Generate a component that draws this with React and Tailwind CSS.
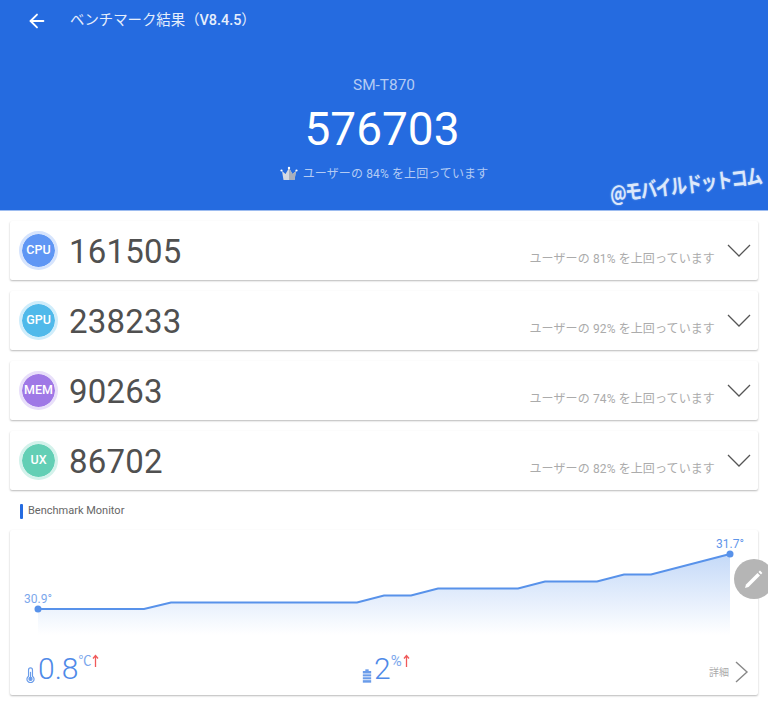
import React from 'react';
import { ArrowLeft } from 'lucide-react';

const scores = [
    { label: 'CPU', score: '161505', percent: 81, fill: 'bg-[#5f96f4]', ring: 'border-[#d6e4fd]' },
    { label: 'GPU', score: '238233', percent: 92, fill: 'bg-[#50b9ea]', ring: 'border-[#cfedfb]' },
    { label: 'MEM', score: '90263', percent: 74, fill: 'bg-[#9f78e6]', ring: 'border-[#e8dffa]' },
    { label: 'UX', score: '86702', percent: 82, fill: 'bg-[#63cfb5]', ring: 'border-[#d3f2eb]' },
];

const chartLine = '38,79 144,79 171,72.5 357,72.5 384,65.5 411,65.5 438,58.5 518,58.5 545,51.5 597,51.5 624,44.5 651,44.5 730,24';

function Crown() {
    return (
        <svg width="18" height="16" viewBox="0 0 18 16">
            <path d="M2 5 L5.5 8 L9 2 L12.5 8 L16 5 L14.5 14 H3.5 Z" fill="#d4d9e2" />
            <path d="M9 2 L12.5 8 L16 5 L14.5 14 H9 Z" fill="#a9afbb" />
            <circle cx="9" cy="2" r="1.2" fill="#ffffff" />
            <circle cx="1.5" cy="4.5" r="1.1" fill="#ffffff" />
            <circle cx="16.5" cy="4.5" r="1.1" fill="#ffffff" />
        </svg>
    );
}

function UpArrow() {
    return (
        <svg width="7" height="14" viewBox="0 0 7 14" fill="none" stroke="#f05a5a" strokeWidth="1.3" className="ml-[1px]">
            <path d="M3.5 13 V2 M1 4.5 L3.5 1.5 L6 4.5" />
        </svg>
    );
}

function ScoreCard({ item }) {
    return (
        <div className="mx-[10px] h-[59px] flex items-center bg-white rounded-[2px] shadow-[0_1px_2px_rgba(0,0,0,0.28)]">
            <div className={`ml-[9px] w-[39px] h-[39px] rounded-full border-[3px] ${item.ring} ${item.fill} bg-clip-padding flex items-center justify-center`}>
                <span className="text-[12.5px] font-medium text-white">{item.label}</span>
            </div>
            <div className="ml-[11px] mt-[1px] text-[33px] leading-none text-[#505050] tracking-[0.2px]">{item.score}</div>
            <div className="ml-auto self-end mb-[13px] text-[12px] leading-[16px] text-[#ababab] tracking-[0.12px]">
                ユーザーの {item.percent}% を上回っています
            </div>
            <svg width="24" height="14" viewBox="0 0 24 14" fill="none" stroke="#555555" strokeWidth="1.3" className="ml-[12px] mr-[7px]">
                <polyline points="1,1 12,12 23,1" />
            </svg>
        </div>
    );
}

export default function App() {
    return (
        <div className="relative w-[768px] h-[706px] overflow-hidden bg-white font-['Roboto','Noto_Sans_CJK_JP',sans-serif]">
            <header className="relative h-[211px] bg-[#256be0] border-b border-[#9dbcf0]">
                <div className="h-[41px] flex items-center pl-[26px]">
                    <ArrowLeft className="text-white" size={22} strokeWidth={2} />
                    <div className="ml-[22px] text-[14.4px] text-[#e6eefc]">
                        ベンチマーク結果（<span className="font-medium">V8.4.5</span>）
                    </div>
                </div>
                <div className="flex flex-col items-center">
                    <div className="mt-[35px] text-[15.4px] leading-[18px] text-[#b4cbf4]">SM-T870</div>
                    <div className="mt-[9px] mr-[4px] text-[46px] leading-[52px] text-white">576703</div>
                    <div className="mt-[11px] flex items-center gap-[5px] text-[12px] leading-[16px] text-[#b4cbf4] tracking-[0.12px]">
                        <Crown />
                        <span>ユーザーの 84% を上回っています</span>
                    </div>
                </div>
                <div className="absolute left-[610px] top-[179px] -rotate-[7deg] scale-x-[0.78] origin-left text-[21px] leading-[28px] font-bold whitespace-nowrap tracking-[-1.5px] text-[#dce8fb] [text-shadow:0_0_2px_#8fb4ee] font-['Noto_Sans_CJK_JP',sans-serif]">
                    @モバイルドットコム
                </div>
            </header>

            <div className="mt-[10px] flex flex-col gap-[11px]">
                {scores.map((item) => (
                    <ScoreCard key={item.label} item={item} />
                ))}
            </div>

            <div className="mt-[14px] ml-[20px] h-[15px] flex items-center">
                <div className="w-[3px] h-[15px] bg-[#256be0] rounded-[1px]" />
                <div className="ml-[5px] text-[11px] text-[#666666]">Benchmark Monitor</div>
            </div>

            <section className="mt-[11px] mx-[10px] h-[165px] bg-white rounded-[2px] shadow-[0_1px_2px_rgba(0,0,0,0.28)] flex flex-col">
                <svg width="748" height="118" viewBox="10 530 748 118" className="shrink-0">
                    <defs>
                        <linearGradient id="chartFill" x1="0" y1="0" x2="0" y2="1">
                            <stop offset="0" stopColor="#c4d9f8" />
                            <stop offset="1" stopColor="#ffffff" />
                        </linearGradient>
                    </defs>
                    <g transform="translate(0,530)">
                        <polygon points={`${chartLine} 730,105 38,105`} fill="url(#chartFill)" />
                        <polyline points={chartLine} fill="none" stroke="#5892ea" strokeWidth="2" />
                        <circle cx="38" cy="79" r="3.5" fill="#5892ea" />
                        <circle cx="730" cy="24" r="3.5" fill="#5892ea" />
                        <text x="24" y="73" fontSize="12" fill="#7ba7ec">30.9°</text>
                        <text x="716" y="18" fontSize="12" fill="#5f96ea">31.7°</text>
                    </g>
                </svg>
                <div className="flex-1 flex items-start pl-[15px] pr-[9px] pt-[4px]">
                    <div className="w-[337px] flex items-end">
                        <svg width="11" height="16" viewBox="0 0 14 20" className="mb-[3px] mr-[2px]" fill="none" stroke="#6a9cea" strokeWidth="1.5">
                            <path d="M4.5 11.5 V3.5 a2.5 2.5 0 0 1 5 0 V11.5 a4.5 4.5 0 1 1 -5 0 Z" />
                            <circle cx="7" cy="15" r="2" fill="#6a9cea" />
                            <path d="M7 13 V6" />
                        </svg>
                        <span className="text-[30px] leading-[34px] font-light text-[#4f8ae8]">0.8</span>
                        <div className="self-start mt-[2px] flex items-center">
                            <span className="text-[13px] leading-[14px] text-[#7ba7ec]">℃</span>
                            <UpArrow />
                        </div>
                    </div>
                    <div className="flex items-end">
                        <svg width="10" height="14" viewBox="0 0 12 16" className="mb-[3px]" fill="#6a9cea">
                            <rect x="4" y="0" width="4" height="2" />
                            <rect x="1" y="2" width="10" height="3" />
                            <rect x="1" y="6" width="10" height="2.5" />
                            <rect x="1" y="9.5" width="10" height="2.5" />
                            <rect x="1" y="13" width="10" height="3" />
                        </svg>
                        <span className="ml-[2px] text-[30px] leading-[34px] font-light text-[#4f8ae8]">2</span>
                        <div className="self-start mt-[2px] flex items-center">
                            <span className="text-[15px] leading-[14px] text-[#7ba7ec]">%</span>
                            <UpArrow />
                        </div>
                    </div>
                    <div className="ml-auto mt-[9px] flex items-center text-[#aaaaaa]">
                        <span className="text-[10px]">詳細</span>
                        <svg width="14" height="22" viewBox="0 0 14 22" fill="none" stroke="#888888" strokeWidth="1.4" className="ml-[6px]">
                            <polyline points="1,1 12,11 1,21" />
                        </svg>
                    </div>
                </div>
            </section>

            <div className="absolute left-[734px] top-[559px] w-[40px] h-[40px] rounded-full bg-[#b5b5b5] flex items-center pl-[10px]">
                <svg width="20" height="20" viewBox="0 0 20 20" fill="#ffffff">
                    <path d="M1 19 L2 15.5 L13.5 4 L16 6.5 L4.5 18 Z" />
                    <path d="M14.5 3 L16 1.6 L18.4 4 L17 5.5 Z" />
                </svg>
            </div>
        </div>
    );
}
